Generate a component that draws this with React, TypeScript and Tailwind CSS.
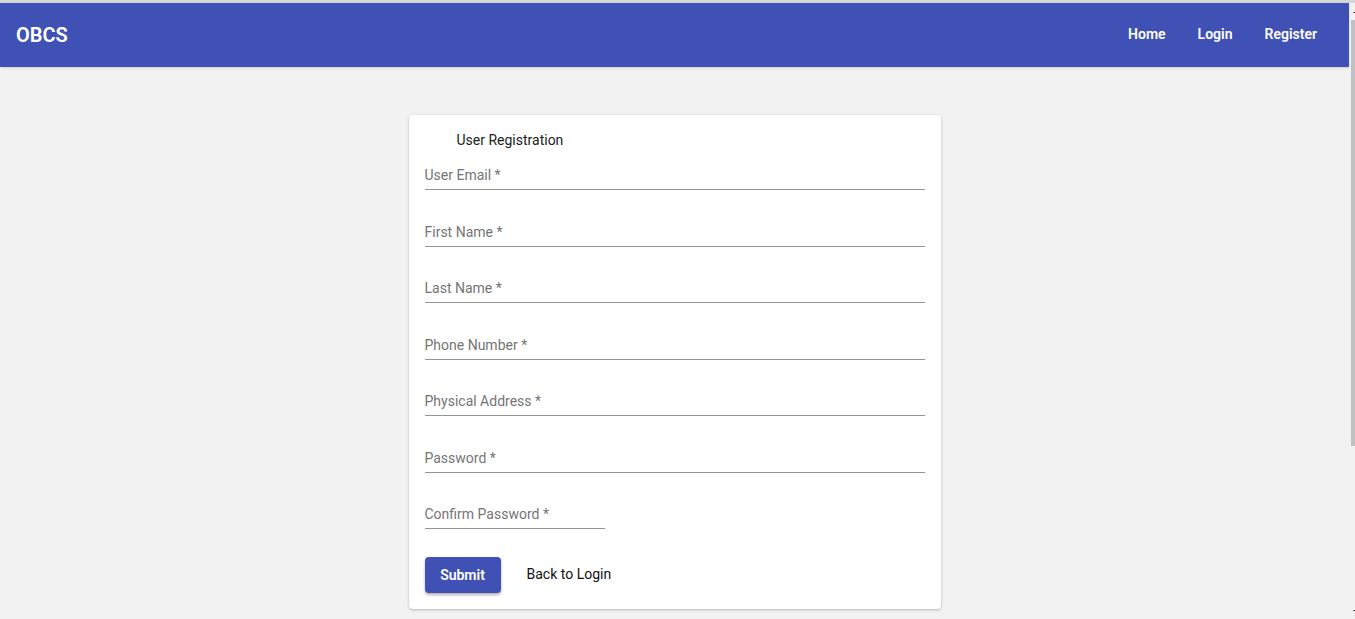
const fields = [
  { label: 'User Email *', full: true },
  { label: 'First Name *', full: true },
  { label: 'Last Name *', full: true },
  { label: 'Phone Number *', full: true },
  { label: 'Physical Address *', full: true },
  { label: 'Password *', full: true },
  { label: 'Confirm Password *', full: false },
];

function Field({ label, full }: { label: string; full: boolean }) {
  return (
    <div
      className={`pb-1 border-b border-[#949494] ${full ? 'w-full' : 'w-[180px]'}`}
    >
      <span className="block text-[14px] leading-5 text-[#757575]">{label}</span>
    </div>
  );
}

export default function App() {
  return (
    <div className="h-[619px] flex flex-col bg-[#f2f2f2] font-['Roboto',sans-serif] overflow-hidden">
      <div className="h-[3px] bg-[#d6d6d6]" />
      <div className="flex flex-1">
        <div className="flex-1 flex flex-col">
          {/* app bar */}
          <header className="h-16 bg-[#3f51b5] flex items-center justify-between pl-4 pr-8 shadow-sm">
            <span className="text-[20px] font-semibold text-white">OBCS</span>
            <nav className="flex gap-8 text-[14px] font-semibold text-white -mt-[2px]">
              <span>Home</span>
              <span>Login</span>
              <span>Register</span>
            </nav>
          </header>

          <div className="flex justify-center pt-12">
            <div className="w-[532px] bg-white rounded shadow-[0_1px_3px_rgba(0,0,0,0.25)] p-4">
              <h2 className="pl-8 text-[14px] leading-5 text-[#212121] -mt-px">User Registration</h2>
              <div className="mt-[15px] flex flex-col gap-[31.5px]">
                {fields.map((f) => (
                  <Field key={f.label} label={f.label} full={f.full} />
                ))}
              </div>
              <div className="mt-7 flex items-center gap-[26px]">
                <button className="h-9 w-[76px] rounded bg-[#3f51b5] text-white text-[14px] font-semibold shadow-[0_2px_3px_rgba(0,0,0,0.3)]">
                  Submit
                </button>
                <span className="text-[14px] text-[#111] -mt-px">Back to Login</span>
              </div>
            </div>
          </div>
        </div>

        {/* scrollbar */}
        <div className="w-[6px] relative">
          <div className="absolute top-[9px] right-0 w-[2px] h-px bg-[#555]" />
          <div className="ml-auto mt-[17px] w-[4px] h-[426px] bg-[#c1c1c1]" />
          <div className="absolute bottom-[8px] right-0 w-[2px] h-px bg-[#555]" />
        </div>
      </div>
    </div>
  );
}
